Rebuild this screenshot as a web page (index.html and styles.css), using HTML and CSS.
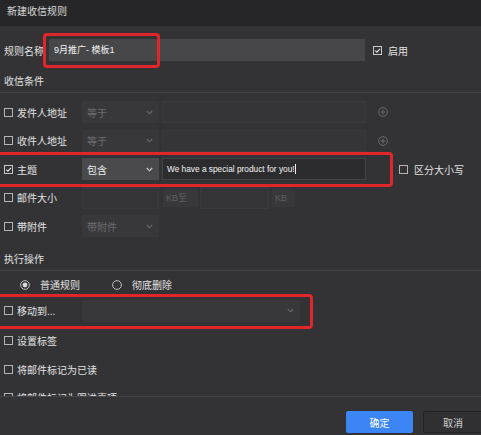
FILE: index.html
```html
<!DOCTYPE html>
<html lang="zh-CN">
<head>
<meta charset="utf-8">
<title>新建收信规则</title>
<link rel="stylesheet" href="styles.css">
</head>
<body>
<div class="dialog">
  <div class="header">新建收信规则</div>
  <div class="content">
    <div class="name-row">
      <span class="name-label">规则名称</span>
      <div class="name-input">9月推广- 模板1</div>
      <span class="cb checked"><svg viewBox="0 0 9 9" width="9" height="9"><rect x="0.5" y="0.5" width="8" height="8" fill="none" stroke="#c8c8c8"/><polyline points="2.2,4.6 3.9,6.2 6.9,2.8" fill="none" stroke="#e6e6e6" stroke-width="1.1"/></svg></span>
      <span class="cb-text">启用</span>
    </div>

    <div class="section-title first">收信条件</div>

    <div class="cond-list">
      <div class="cond-row">
        <div class="cond-label"><span class="cb"><svg viewBox="0 0 9 9" width="9" height="9"><rect x="0.5" y="0.5" width="8" height="8" fill="none" stroke="#b4b4b4"/></svg></span>发件人地址</div>
        <div class="select dim"><span>等于</span><svg class="chev" viewBox="0 0 7 5" width="7" height="5"><polyline points="0.8,1 3.5,3.8 6.2,1" fill="none" stroke="#6a6a6d" stroke-width="1.1"/></svg></div>
        <div class="text-input dim"></div>
        <svg class="plus" viewBox="0 0 10 10" width="10" height="10"><circle cx="5" cy="5" r="4.4" fill="none" stroke="#6a6a6d"/><path d="M5 2.6V7.4M2.6 5H7.4" stroke="#6a6a6d"/></svg>
      </div>
      <div class="cond-row">
        <div class="cond-label"><span class="cb"><svg viewBox="0 0 9 9" width="9" height="9"><rect x="0.5" y="0.5" width="8" height="8" fill="none" stroke="#b4b4b4"/></svg></span>收件人地址</div>
        <div class="select dim"><span>等于</span><svg class="chev" viewBox="0 0 7 5" width="7" height="5"><polyline points="0.8,1 3.5,3.8 6.2,1" fill="none" stroke="#6a6a6d" stroke-width="1.1"/></svg></div>
        <div class="text-input dim"></div>
        <svg class="plus" viewBox="0 0 10 10" width="10" height="10"><circle cx="5" cy="5" r="4.4" fill="none" stroke="#6a6a6d"/><path d="M5 2.6V7.4M2.6 5H7.4" stroke="#6a6a6d"/></svg>
      </div>
      <div class="cond-row">
        <div class="cond-label"><span class="cb"><svg viewBox="0 0 9 9" width="9" height="9"><rect x="0.5" y="0.5" width="8" height="8" fill="none" stroke="#c8c8c8"/><polyline points="2.2,4.6 3.9,6.2 6.9,2.8" fill="none" stroke="#e6e6e6" stroke-width="1.1"/></svg></span>主题</div>
        <div class="select active"><span>包含</span><svg class="chev" viewBox="0 0 7 5" width="7" height="5"><polyline points="0.8,1 3.5,3.8 6.2,1" fill="none" stroke="#d0d0d0" stroke-width="1.1"/></svg></div>
        <div class="text-input active">We have a special product for you!<span class="caret"></span></div>
        <span class="cb case"><svg viewBox="0 0 9 9" width="9" height="9"><rect x="0.5" y="0.5" width="8" height="8" fill="none" stroke="#b4b4b4"/></svg></span>
        <span class="cb-text">区分大小写</span>
      </div>
      <div class="cond-row">
        <div class="cond-label"><span class="cb"><svg viewBox="0 0 9 9" width="9" height="9"><rect x="0.5" y="0.5" width="8" height="8" fill="none" stroke="#b4b4b4"/></svg></span>邮件大小</div>
        <div class="text-input dim size-a"></div>
        <div class="unit">KB至</div>
        <div class="text-input dim size-b"></div>
        <div class="unit kb">KB</div>
      </div>
      <div class="cond-row">
        <div class="cond-label"><span class="cb"><svg viewBox="0 0 9 9" width="9" height="9"><rect x="0.5" y="0.5" width="8" height="8" fill="none" stroke="#b4b4b4"/></svg></span>带附件</div>
        <div class="select dim"><span>带附件</span><svg class="chev" viewBox="0 0 7 5" width="7" height="5"><polyline points="0.8,1 3.5,3.8 6.2,1" fill="none" stroke="#6a6a6d" stroke-width="1.1"/></svg></div>
      </div>
    </div>

    <div class="section-title">执行操作</div>

    <div class="radio-row">
      <span class="radio on"><svg viewBox="0 0 10 10" width="10" height="10"><circle cx="5" cy="5" r="4.4" fill="none" stroke="#bdbdbd"/><circle cx="5" cy="5" r="2.4" fill="#d8d8d8"/></svg></span>
      <span class="radio-text">普通规则</span>
      <span class="radio off"><svg viewBox="0 0 10 10" width="10" height="10"><circle cx="5" cy="5" r="4.4" fill="none" stroke="#bdbdbd"/></svg></span>
      <span class="radio-text">彻底删除</span>
    </div>

    <div class="action-row move-row">
      <div class="cond-label"><span class="cb"><svg viewBox="0 0 9 9" width="9" height="9"><rect x="0.5" y="0.5" width="8" height="8" fill="none" stroke="#b4b4b4"/></svg></span>移动到...</div>
      <div class="select dim wide"><span></span><svg class="chev" viewBox="0 0 7 5" width="7" height="5"><polyline points="0.8,1 3.5,3.8 6.2,1" fill="none" stroke="#6a6a6d" stroke-width="1.1"/></svg></div>
    </div>
    <div class="action-row">
      <div class="cond-label"><span class="cb"><svg viewBox="0 0 9 9" width="9" height="9"><rect x="0.5" y="0.5" width="8" height="8" fill="none" stroke="#b4b4b4"/></svg></span>设置标签</div>
    </div>
    <div class="action-row">
      <div class="cond-label"><span class="cb"><svg viewBox="0 0 9 9" width="9" height="9"><rect x="0.5" y="0.5" width="8" height="8" fill="none" stroke="#b4b4b4"/></svg></span>将邮件标记为已读</div>
    </div>
    <div class="action-row">
      <div class="cond-label"><span class="cb"><svg viewBox="0 0 9 9" width="9" height="9"><rect x="0.5" y="0.5" width="8" height="8" fill="none" stroke="#b4b4b4"/></svg></span>将邮件标记为跟进事项</div>
    </div>

    <div class="mark mark-name"></div>
    <div class="mark mark-subject"></div>
    <div class="mark mark-move"></div>
  </div>
  <div class="footer">
    <button class="btn primary">确定</button>
    <button class="btn">取消</button>
  </div>
</div>
</body>
</html>
```

FILE: styles.css
```css
* { box-sizing: border-box; }

html, body {
  margin: 0;
  padding: 0;
  background: #333336;
}

body {
  width: 481px;
  height: 435px;
  overflow: hidden;
  font-family: "Liberation Sans", "Noto Sans CJK SC", sans-serif;
  font-size: 10px;
  color: #e2e2e2;
}

.dialog {
  width: 481px;
  height: 435px;
  display: flex;
  flex-direction: column;
  background: #333336;
}

.header {
  height: 26px;
  flex: none;
  background: #262628;
  color: #dcdcdc;
  line-height: 24px;
  padding-left: 7px;
}

.content {
  position: relative;
  flex: 1;
  overflow: hidden;
}

.name-row {
  display: flex;
  align-items: center;
  height: 22px;
  margin-top: 13px;
  padding-left: 4px;
}

.name-label { width: 45px; }

.name-input {
  width: 316px;
  height: 22px;
  background: #47474a;
  color: #f2f2f2;
  font-size: 9px;
  line-height: 22px;
  padding-left: 5px;
  margin-right: 8px;
}

.cb {
  display: inline-flex;
  width: 9px;
  height: 9px;
  flex: none;
}

.cb svg { display: block; }

.cb-text { margin-left: 6px; }

.section-title {
  padding: 10px 0 2px 4px;
  line-height: 17px;
  height: 30px;
  border-bottom: 1px solid #464649;
}

.section-title.first { margin-top: 2px; }

.cond-list {
  margin-top: 5px;
  display: grid;
  grid-auto-rows: 28.5px;
}

.cond-row, .action-row {
  display: flex;
  align-items: center;
  padding-left: 4px;
}

.action-row { height: 28.5px; }

.move-row {
  height: 28px;
  align-items: flex-start;
  padding-top: 1px;
}

.move-row .cond-label { height: 22px; }

.cond-label {
  width: 78px;
  flex: none;
  display: flex;
  align-items: center;
  white-space: nowrap;
}

.cond-label .cb { margin-right: 4px; }

.select {
  width: 77px;
  height: 22px;
  flex: none;
  display: flex;
  align-items: center;
  justify-content: space-between;
  padding: 0 6px 0 5px;
}

.select.dim { background: #38383b; color: #6c6c6f; }
.select.active { background: #4a4a4d; color: #ececec; }
.select.wide { width: 218px; }

.chev { display: block; }

.text-input {
  height: 22px;
  flex: none;
  margin-left: 3px;
  width: 204px;
}

.text-input.dim {
  background: #353538;
  border: 1px solid #3a3a3d;
}

.text-input.active {
  background: #2c2c2f;
  border: 1px solid #434346;
  color: #f4f4f4;
  font-size: 8.3px;
  line-height: 20px;
  padding-left: 4px;
  white-space: nowrap;
}

.caret {
  display: inline-block;
  width: 1px;
  height: 10px;
  background: #f0f0f0;
  vertical-align: -2px;
}

.plus {
  display: block;
  margin-left: 12px;
}

.cb.case { margin-left: 33px; }

.text-input.size-a { margin-left: 0; width: 77px; }
.text-input.size-b { margin-left: 2px; width: 69px; }

.unit {
  height: 18px;
  margin-left: 4px;
  width: 35px;
  background: #38383b;
  color: #5f5f62;
  font-size: 9px;
  line-height: 18px;
  padding-left: 3px;
}

.unit.kb { width: 23px; margin-left: 3px; }

.radio-row {
  display: flex;
  align-items: center;
  height: 28px;
  padding-left: 20px;
}

.radio { display: inline-flex; }
.radio svg { display: block; }
.radio-text { margin-left: 10px; }
.radio.off { margin-left: 32px; }

.mark {
  position: absolute;
  border: 3px solid #e0262a;
  border-radius: 4px;
}

.mark-name { left: 43px; top: 7px; width: 117px; height: 35px; }
.mark-subject { left: -4px; top: 126px; width: 397px; height: 35px; }
.mark-move { left: -4px; top: 268px; width: 317px; height: 35px; }

.footer {
  height: 39px;
  flex: none;
  border-top: 1px solid #46464a;
  display: flex;
  align-items: flex-start;
  padding: 14px 0 0 346px;
  gap: 10px;
  background: #333336;
}

.btn {
  height: 22px;
  width: 60px;
  flex: none;
  font: inherit;
  font-size: 10px;
  border: 1px solid #222224;
  background: #303033;
  color: #cfcfcf;
  border-radius: 2px;
  padding: 0;
}

.btn.primary {
  width: 67px;
  background: #3b86f4;
  border-color: #3b86f4;
  color: #ffffff;
}
```
